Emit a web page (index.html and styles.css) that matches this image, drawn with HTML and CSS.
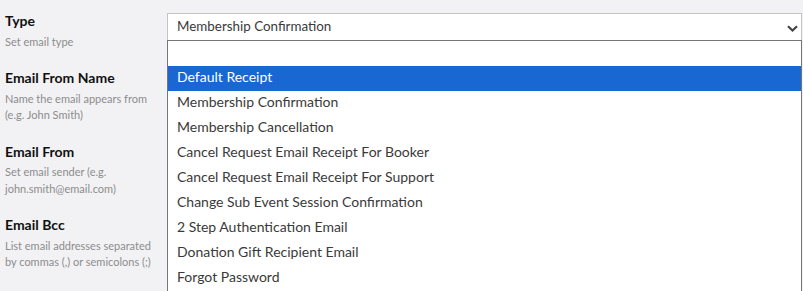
FILE: index.html
```html
<!DOCTYPE html>
<html lang="en">

<head>
    <meta charset="utf-8">
    <title>Email Settings</title>
    <link rel="stylesheet" href="styles.css">
</head>

<body>
    <div class="settings">
        <div class="field-info">
            <div class="field-block">
                <div class="field-title">Type</div>
                <div class="field-desc">Set email type</div>
            </div>
            <div class="field-block">
                <div class="field-title">Email From Name</div>
                <div class="field-desc">Name the email appears from<br>(e.g. John Smith)</div>
            </div>
            <div class="field-block">
                <div class="field-title">Email From</div>
                <div class="field-desc">Set email sender (e.g.<br>john.smith@email.com)</div>
            </div>
            <div class="field-block">
                <div class="field-title">Email Bcc</div>
                <div class="field-desc">List email addresses separated<br>by commas (,) or semicolons (;)</div>
            </div>
        </div>

        <div class="field-input">
            <div class="my-select">
                <span class="my-select-value">Membership Confirmation</span>
                <!-- chevron -->
                <svg class="my-select-arrow" width="11" height="7" viewBox="0 0 11 7">
                    <path d="M1 1.2 L5.5 5.5 L10 1.2" fill="none" stroke="#444" stroke-width="2.2" />
                </svg>
            </div>
            <ul class="my-options">
                <li class="my-option"></li>
                <li class="my-option selected">Default Receipt</li>
                <li class="my-option">Membership Confirmation</li>
                <li class="my-option">Membership Cancellation</li>
                <li class="my-option">Cancel Request Email Receipt For Booker</li>
                <li class="my-option">Cancel Request Email Receipt For Support</li>
                <li class="my-option">Change Sub Event Session Confirmation</li>
                <li class="my-option">2 Step Authentication Email</li>
                <li class="my-option">Donation Gift Recipient Email</li>
                <li class="my-option">Forgot Password</li>
            </ul>
        </div>
    </div>
</body>

</html>
```

FILE: styles.css
```css
body {
    margin: 0;
    height: 291px;
    overflow: hidden;
    background-color: #f2f2f4;
    font-family: Lato, "Noto Sans", sans-serif;
}

.settings {
    display: flex;
}

.field-info {
    width: 162px;
    padding-left: 5px;
    padding-top: 12px;
}

.field-block {
    margin-bottom: 19px;
}

.field-title {
    font-size: 14px;
    font-weight: bold;
    line-height: 18px;
    color: #111;
    margin-bottom: 3.5px;
}

.field-desc {
    font-size: 11px;
    line-height: 16.5px;
    color: #8c8c8c;
}

.field-input {
    width: 635px;
    padding-top: 13px;
}

.my-select {
    display: flex;
    align-items: center;
    justify-content: space-between;
    height: 23px;
    padding: 0 3px 3px 9px;
    background-color: #fff;
    border: 1px solid #c4c4c4;
    border-bottom: none;
    font-size: 13.4px;
    color: #3a3a3a;
}

.my-select-arrow {
    margin-top: 5px;
}

.my-options {
    list-style: none;
    margin: 0;
    padding: 0;
    background-color: #fff;
    border: 1px solid #767676;
    border-bottom: none;
}

.my-option {
    height: 21px;
    line-height: 21px;
    padding-left: 9px;
    padding-bottom: 4px;
    font-size: 14px;
    color: #3a3a3a;
}

.my-option.selected {
    background-color: #1967d2;
    color: #fff;
}
```
